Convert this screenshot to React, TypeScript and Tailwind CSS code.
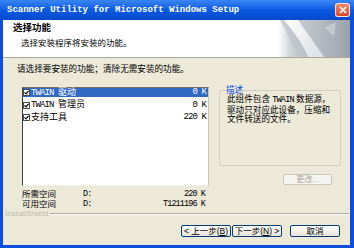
const cjk = "font-['Liberation_Sans','Noto_Sans_CJK_SC',sans-serif]";
const mono = "font-['Liberation_Mono','Noto_Sans_CJK_SC',monospace] tracking-[-0.9px]";

const features = [
  { latin: "TWAIN", name: "驱动", size: "0 K", selected: true },
  { latin: "TWAIN", name: "管理员", size: "0 K", selected: false },
  { latin: "", name: "支持工具", size: "220 K", selected: false },
];

function Check() {
  return (
    <svg width="7" height="7" viewBox="0 0 7 7" className="shrink-0">
      <rect x="0.5" y="0.5" width="6" height="6" fill="#fff" stroke="#4a4a4a" />
      <path d="M1.5 3.3 L3 4.8 L5.6 1.8" fill="none" stroke="#000" strokeWidth="1.2" />
    </svg>
  );
}

function HeaderArt() {
  return (
    <svg width="72" height="37" viewBox="0 0 72 37" className="shrink-0">
      <defs>
        <linearGradient id="hbg" x1="0" x2="1" y1="0" y2="0">
          <stop offset="0" stopColor="#ffffff" />
          <stop offset="0.18" stopColor="#cdd2d7" />
          <stop offset="1" stopColor="#9aa3ac" />
        </linearGradient>
        <linearGradient id="hcurl" x1="0" y1="0" x2="1" y2="0.5">
          <stop offset="0" stopColor="#ffffff" />
          <stop offset="1" stopColor="#dfe3e7" />
        </linearGradient>
      </defs>
      <rect width="72" height="37" fill="url(#hbg)" />
      <path d="M6 0 C14 10 24 22 30 37 L46 37 C38 25 28 12 20 0 Z" fill="url(#hcurl)" />
      <path d="M2 0 C8 12 16 26 20 37 L30 37 C24 22 14 10 6 0 Z" fill="#b9c0c7" opacity="0.6" />
      <path d="M46 8 L58 2 L56 16 Z" fill="#c3c9cf" />
    </svg>
  );
}

function XpButton({ children, disabled }: { children: React.ReactNode; disabled?: boolean }) {
  return (
    <button
      disabled={disabled}
      className={
        disabled
          ? "flex h-[11px] w-[49px] items-center justify-center rounded-[2px] border border-[#c9c7ba] bg-[#f5f4ef] text-[8px] leading-none text-[#aca899]"
          : "flex h-[12px] w-[50px] items-center justify-center rounded-[2px] border border-[#003c74] bg-gradient-to-b from-white to-[#e6e3d6] text-[8.5px] leading-none text-black"
      }
    >
      {children}
    </button>
  );
}

export default function App() {
  return (
    <div className={`flex h-[248px] w-[354px] flex-col overflow-hidden bg-[#0d4fdc] ${cjk}`}>
      {/* title bar */}
      <div className="flex h-[20px] shrink-0 items-center justify-between bg-gradient-to-b from-[#3a86f4] via-[#0a5ae2] to-[#0849cc] pl-[7px] pr-[4px]">
        <span className="font-['Liberation_Mono',monospace] text-[9px] font-bold leading-none text-white">
          Scanner Utility for Microsoft Windows Setup
        </span>
        <div className="flex h-[14px] w-[15px] items-center justify-center rounded-[3px] border border-white/80 bg-gradient-to-b from-[#f08a6a] to-[#d8482a]">
          <svg width="8" height="8" viewBox="0 0 8 8">
            <path d="M1 1 L7 7 M7 1 L1 7" stroke="#fff" strokeWidth="1.6" />
          </svg>
        </div>
      </div>

      <div className="mb-[3px] ml-[3px] mr-[4px] flex flex-1 flex-col bg-[#ece9d8]">
        {/* header */}
        <div className="flex h-[38px] shrink-0 justify-between border-b border-[#aca899] bg-white">
          <div className="pl-[10px] pt-[2.5px]">
            <div className="text-[9.5px] font-bold leading-[10px] text-black">选择功能</div>
            <div className="mt-[5px] pl-[8px] text-[8.5px] leading-[10px] text-black">
              选择安装程序将安装的功能。
            </div>
          </div>
          <HeaderArt />
        </div>

        <div className="mt-[6px] pl-[14px] text-[8.6px] leading-[10px] text-black">
          请选择要安装的功能；清除无需安装的功能。
        </div>

        {/* list + description */}
        <div className="mt-[12px] flex items-start gap-[10px] pl-[19px]">
          <div className="mt-[1px] h-[99px] w-[187px] border border-b-[#f1efe2] border-l-[#404040] border-r-[#c8c5b8] border-t-[#716f64] bg-white">
            {features.map((f) => (
              <div key={f.name} className="mb-[3.5px] flex h-[9px] items-center">
                <div
                  className={`flex h-[9px] flex-1 items-center gap-[1px] pr-[2px] text-[9px] leading-none ${
                    f.selected ? "bg-[#316ac5] text-white" : "text-black"
                  }`}
                >
                  <Check />
                  <span className="flex-1">
                    {f.latin && <span className={mono}>{f.latin} </span>}
                    {f.name}
                  </span>
                  <span className={mono}>{f.size}</span>
                </div>
              </div>
            ))}
          </div>

          <div className="flex w-[122px] flex-col">
            <fieldset className="h-[80px] rounded-[3px] border border-[#d0d0bf] px-[7px]">
              <legend className="-ml-[1px] px-0 text-[8.6px] leading-[8px] text-[#0046d5]">描述</legend>
              <div className="mt-[1px] text-[8.6px] leading-[9.5px] text-black">
                <div>
                  此组件包含 <span className={mono}>TWAIN</span> 数据源，
                </div>
                <div>驱动只对应此设备，压缩和</div>
                <div>文件转送的文件。</div>
              </div>
            </fieldset>
            <div className="mt-[8px] flex justify-end pr-[9px]">
              <XpButton disabled>更改...</XpButton>
            </div>
          </div>
        </div>

        {/* space info */}
        <div className="ml-[19px] mt-[3px] w-[183px] text-[8.5px] leading-[10px] text-black">
          <div className="flex">
            <span className="w-[61px]">所需空间</span>
            <span className={`flex-1 ${mono}`}>D:</span>
            <span className={mono}>220 K</span>
          </div>
          <div className="flex">
            <span className="w-[61px]">可用空间</span>
            <span className={`flex-1 ${mono}`}>D:</span>
            <span className={mono}>T1211196 K</span>
          </div>
        </div>

        {/* InstallShield separator */}
        <div className="flex h-[10px] items-center gap-[2px] pl-[2px] pr-[1px]">
          <span className="font-['Liberation_Sans',sans-serif] text-[8px] leading-none text-[#bdbaab]">
            InstallShield
          </span>
          <div className="flex-1 border-b border-t border-b-white border-t-[#aca899]" />
        </div>

        {/* buttons */}
        <div className="mt-[6px] flex justify-end pr-[10px]">
          <XpButton>
            &lt; 上一步(<u>B</u>)
          </XpButton>
          <div className="w-[1px]" />
          <XpButton>
            下一步(<u>N</u>) &gt;
          </XpButton>
          <div className="w-[8px]" />
          <XpButton>取消</XpButton>
        </div>
      </div>
    </div>
  );
}
